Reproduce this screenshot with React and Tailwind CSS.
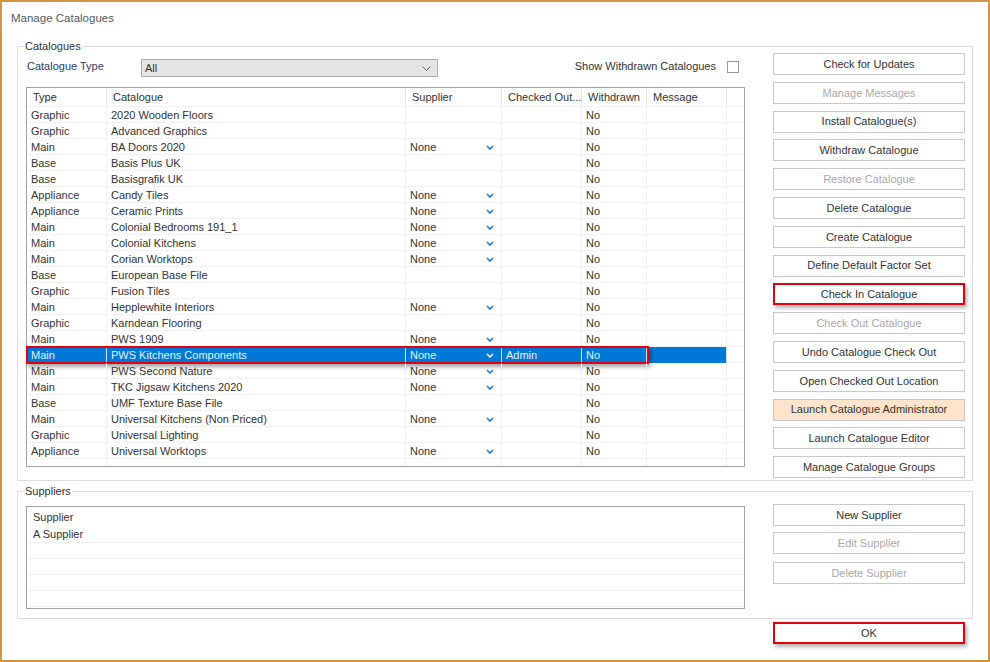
import React from "react";

const cols = ["w-[80px]", "w-[299px]", "w-[96px]", "w-[80px]", "w-[65px]", "w-[80px]", "w-[17px]"];

const rows = [
  ["Graphic", "2020 Wooden Floors", ""],
  ["Graphic", "Advanced Graphics", ""],
  ["Main", "BA Doors 2020", "None"],
  ["Base", "Basis Plus UK", ""],
  ["Base", "Basisgrafik UK", ""],
  ["Appliance", "Candy Tiles", "None"],
  ["Appliance", "Ceramic Prints", "None"],
  ["Main", "Colonial Bedrooms 191_1", "None"],
  ["Main", "Colonial Kitchens", "None"],
  ["Main", "Corian Worktops", "None"],
  ["Base", "European Base File", ""],
  ["Graphic", "Fusion Tiles", ""],
  ["Main", "Hepplewhite Interiors", "None"],
  ["Graphic", "Karndean Flooring", ""],
  ["Main", "PWS 1909", "None"],
  ["Main", "PWS Kitchens Components", "None", "Admin"],
  ["Main", "PWS Second Nature", "None"],
  ["Main", "TKC Jigsaw Kitchens 2020", "None"],
  ["Base", "UMF Texture Base File", ""],
  ["Main", "Universal Kitchens (Non Priced)", "None"],
  ["Graphic", "Universal Lighting", ""],
  ["Appliance", "Universal Worktops", "None"],
];

const buttons = [
  { label: "Check for Updates" },
  { label: "Manage Messages", disabled: true },
  { label: "Install Catalogue(s)" },
  { label: "Withdraw Catalogue" },
  { label: "Restore Catalogue", disabled: true },
  { label: "Delete Catalogue" },
  { label: "Create Catalogue" },
  { label: "Define Default Factor Set" },
  { label: "Check In Catalogue", marked: true },
  { label: "Check Out Catalogue", disabled: true },
  { label: "Undo Catalogue Check Out" },
  { label: "Open Checked Out Location" },
  { label: "Launch Catalogue Administrator", peach: true },
  { label: "Launch Catalogue Editor" },
  { label: "Manage Catalogue Groups" },
];

const SELECTED = 15;

function Chevron({ white }) {
  return (
    <svg width="8" height="5" viewBox="0 0 8 5" className="shrink-0">
      <path d="M1 1 L4 4 L7 1" fill="none" stroke={white ? "#ffffff" : "#1a78d2"} strokeWidth="1.6" />
    </svg>
  );
}

function Btn({ label, disabled, marked, peach, className = "" }) {
  let cls = "h-[22px] w-[192px] flex items-center justify-center border ";
  if (marked) cls += "border-2 border-[#e3000f] shadow-[2px_3px_4px_rgba(0,0,0,0.3)] bg-white ";
  else if (peach) cls += "border-[#c9c9c9] bg-[#fde4ca] ";
  else cls += "border-[#c9c9c9] bg-white ";
  cls += disabled ? "text-[#a8a8a8] " : "text-[#333] ";
  return <div className={cls + className}>{label}</div>;
}

function Row({ r, i }) {
  const sel = i === SELECTED;
  return (
    <div className="relative flex h-[16px]">
      {cols.map((w, c) => {
        let content = null;
        if (c === 0 || c === 1) content = r[c];
        if (c === 2 && r[2]) {
          content = (
            <div className="flex w-full items-center justify-between pr-[3px]">
              <span>{r[2]}</span>
              <Chevron white={sel} />
            </div>
          );
        }
        if (c === 3 && r[3]) content = r[3];
        if (c === 4) content = "No";
        const last = c === cols.length - 1;
        const blue = sel && !last;
        const bg = blue ? "bg-[#0078d7] text-[#e8f2fc] " : "border-b border-[#f1f1f1] ";
        const line = last ? "" : blue ? "border-r border-[#cfe3f6] " : "border-r border-[#ededed] ";
        return (
          <div key={c} className={w + " h-full flex items-center px-[4px] pt-[1px] leading-[15px] " + bg + line}>
            {content}
          </div>
        );
      })}
      {sel && (
        <div className="absolute -left-[1px] -top-[1px] h-[18px] w-[623px] border-2 border-[#e3000f] shadow-[2px_3px_4px_rgba(0,0,0,0.35)]" />
      )}
    </div>
  );
}

function GroupBox({ title, className, children }) {
  return (
    <div className={"relative border border-[#dcdcdc] " + className}>
      <span className="absolute left-[6px] -top-[8px] bg-white px-[1px] leading-[14px] text-[#333]">{title}</span>
      {children}
    </div>
  );
}

export default function App() {
  return (
    <div
      className="w-[990px] h-[662px] border-2 border-[#d4933f] bg-white text-[11px] text-[#333] overflow-hidden"
      style={{ fontFamily: '"Liberation Sans", Arial, sans-serif' }}
    >
      <div className="pt-[9px] pl-[9px] leading-[14px] text-[11.5px] text-[#505a66]">Manage Catalogues</div>

      {/* Catalogues */}
      <GroupBox title="Catalogues" className="ml-[15px] mt-[21px] w-[956px] h-[435px] flex">
        <div className="ml-[8px] w-[719px] pt-[12px]">
          <div className="flex h-[18px] items-center">
            <div className="w-[115px] pl-[1px] -mt-[3px] text-[#2c3e60]">Catalogue Type</div>
            <div className="flex h-[18px] w-[297px] items-center justify-between border border-[#adadad] bg-[#e5e5e5] pl-[3px] pr-[6px]">
              <span>All</span>
              <svg width="9" height="5" viewBox="0 0 9 5">
                <path d="M0.5 0.5 L4.5 4.5 L8.5 0.5" fill="none" stroke="#666" strokeWidth="1" />
              </svg>
            </div>
            <div className="flex-1" />
            <span className="-mt-[4px] text-[#333]">Show Withdrawn Catalogues</span>
            <div className="ml-[11px] mr-[6px] -mt-[2px] h-[12px] w-[12px] border border-[#999] bg-white" />
          </div>

          <div className="mt-[10px] flex h-[380px] flex-col border border-[#a3a3a3]">
            <div className="flex h-[19px] border-b border-[#f1f1f1]">
              {["Type", "Catalogue", "Supplier", "Checked Out...", "Withdrawn", "Message", ""].map((h, c) => (
                <div
                  key={c}
                  className={
                    cols[c] +
                    " h-full flex items-center pl-[6px] whitespace-nowrap overflow-hidden " +
                    (c < 6 ? "border-r border-[#e5e5e5]" : "")
                  }
                >
                  {h}
                </div>
              ))}
            </div>
            {rows.map((r, i) => (
              <Row key={i} r={r} i={i} />
            ))}
            <div className="flex flex-1">
              {cols.map((w, c) => (
                <div key={c} className={w + " h-full " + (c < 6 ? "border-r border-[#ededed]" : "")} />
              ))}
            </div>
          </div>
        </div>

        <div className="ml-[28px] flex flex-col gap-[6.8px] pt-[6px]">
          {buttons.map((b) => (
            <Btn key={b.label} {...b} />
          ))}
        </div>
      </GroupBox>

      {/* Suppliers */}
      <GroupBox title="Suppliers" className="ml-[15px] mt-[10px] w-[956px] h-[128px] flex">
        <div className="ml-[8px] mt-[14px] flex h-[103px] w-[719px] flex-col border border-[#a3a3a3]">
          <div className="flex h-[20px] items-center px-[6px]">Supplier</div>
          <div className="flex h-[16px] items-center border-b border-[#f1f1f1] px-[6px]">A Supplier</div>
          <div className="h-[16px] border-b border-[#f1f1f1]" />
          <div className="h-[16px] border-b border-[#f1f1f1]" />
          <div className="h-[16px] border-b border-[#f1f1f1]" />
          <div className="h-[16px] border-b border-[#f1f1f1]" />
        </div>
        <div className="ml-[28px] flex flex-col pt-[12px]">
          <Btn label="New Supplier" />
          <Btn label="Edit Supplier" disabled className="mt-[6px]" />
          <Btn label="Delete Supplier" disabled className="mt-[8px]" />
        </div>
      </GroupBox>

      <Btn label="OK" marked className="ml-[771px] mt-[3px]" />
    </div>
  );
}
